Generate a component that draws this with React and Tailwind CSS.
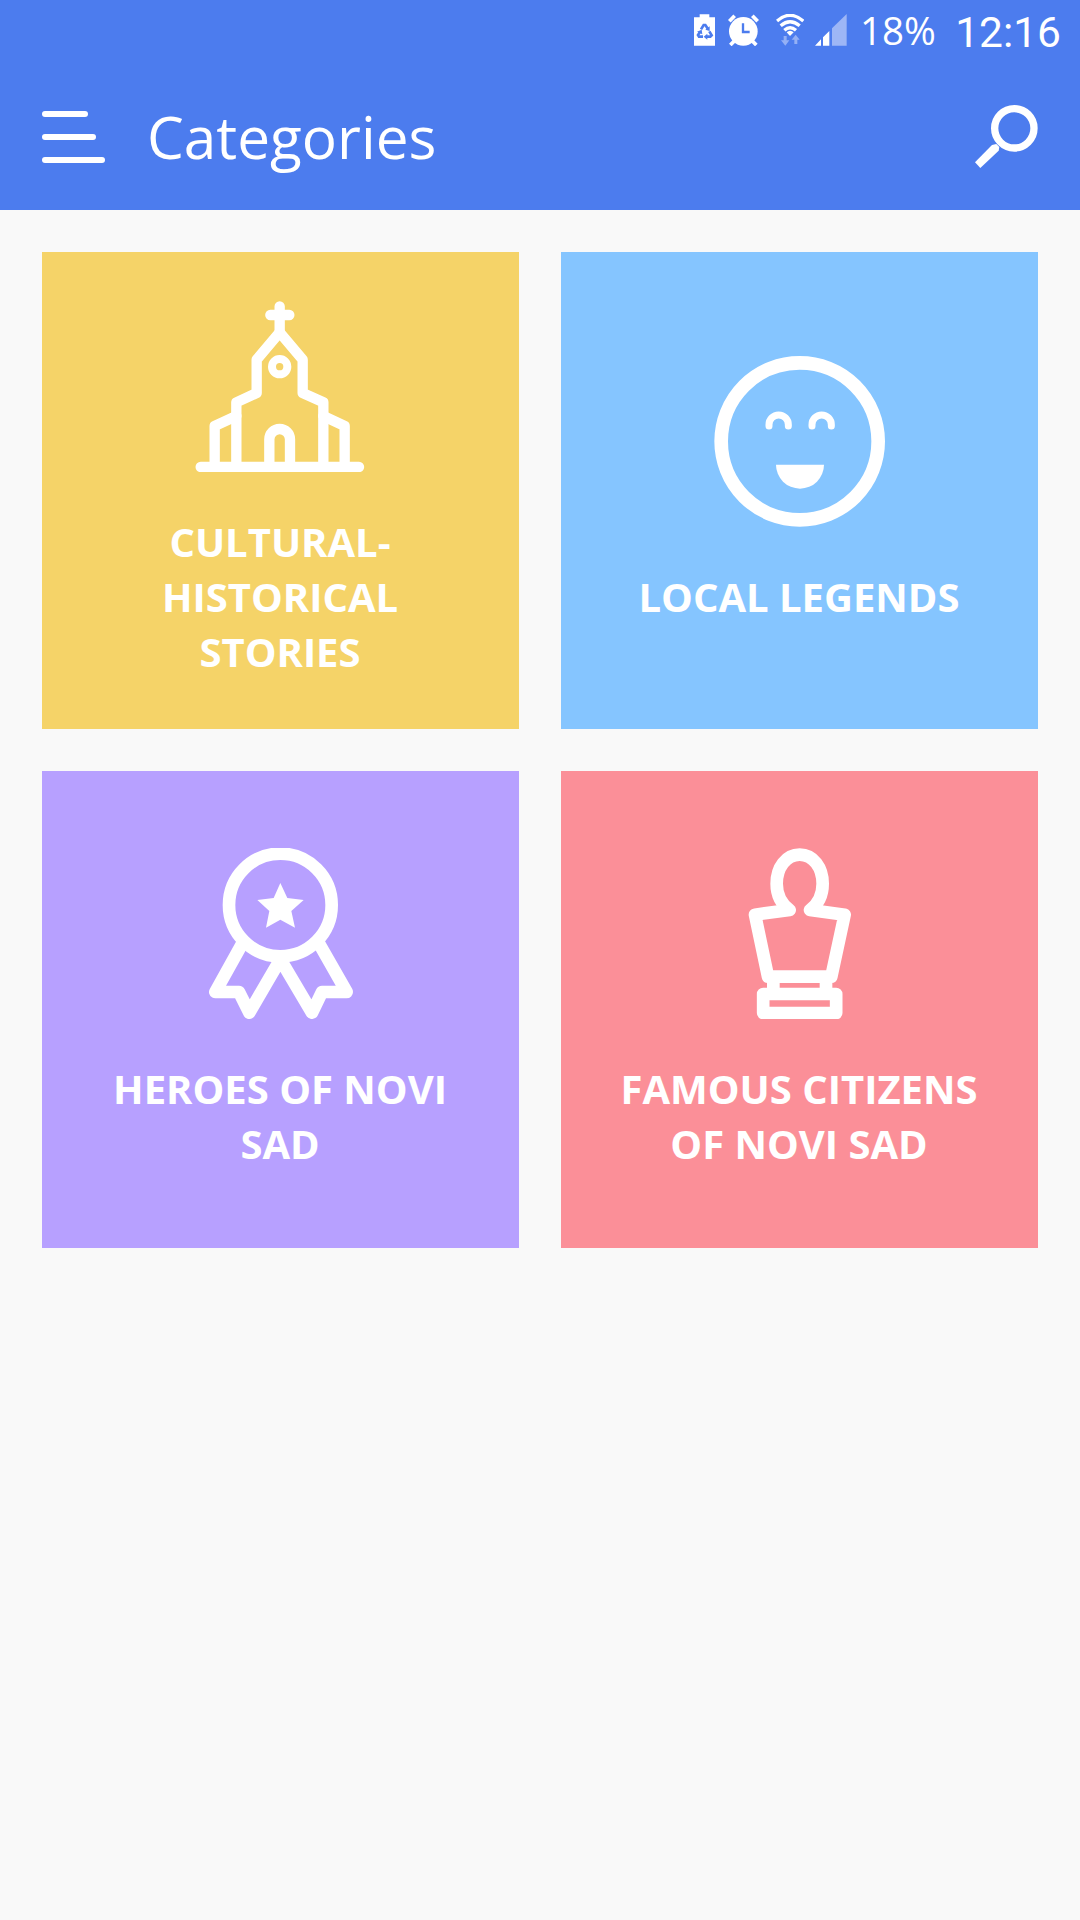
import React from "react";

function BatteryIcon() {
  return (
    <svg className="h-8 w-[21px]" viewBox="42 43 63 96" fill="none">
      <path d="M42 53H59V44H88V53H105V138H42Z" fill="#fff" />
      <g stroke="#4c7cee" strokeWidth="8">
        <path d="M63 89L71 76H76L84 88" />
        <path d="M88 95L95 107L91 111H80" />
        <path d="M69 111H57L54 106L60 97" />
      </g>
      <path d="M89 80V94L76 90ZM82 102V120L71 111ZM51 96L65 90L67 104Z" fill="#4c7cee" />
    </svg>
  );
}

function AlarmIcon() {
  return (
    <svg className="h-8 w-[31px]" viewBox="143 43 93 96" fill="none">
      <circle cx="189" cy="95" r="43" fill="#fff" />
      <path d="M147 65L163 48M216 48L232 65" stroke="#fff" strokeWidth="11" />
      <path d="M150 136L166 120M228 136L212 120" stroke="#fff" strokeWidth="11" />
      <path d="M188 71V97H208" stroke="#4c7cee" strokeWidth="7" />
    </svg>
  );
}

function WifiIcon() {
  return (
    <svg className="h-8 w-[28px]" viewBox="289 43 84 96" fill="none">
      <g stroke="#fff" strokeWidth="10">
        <path d="M292 64Q331 30 371 64" />
        <path d="M303 78Q331 54 360 78" />
        <path d="M314 92Q331 77 349 92" />
      </g>
      <path d="M321 98Q331 89 342 98L331 109Z" fill="#fff" />
      <path
        d="M312 109H321V122H329L317 138L304 122H312ZM344 133H353V120H360L348 105L336 120H344Z"
        fill="#94b0f5"
      />
    </svg>
  );
}

function SignalIcon() {
  return (
    <svg className="h-8 w-[32px]" viewBox="405 43 96 96" fill="none">
      <path d="M456 86L500 43V138H456Z" fill="#9db6f6" />
      <path d="M405 138L423 119V138ZM429 113L448 94V138H429Z" fill="#fff" />
    </svg>
  );
}

function SearchIcon() {
  return (
    <svg className="size-[63px]" viewBox="76 45 189 189" fill="none">
      <circle cx="194" cy="115" r="59" stroke="#fff" strokeWidth="22" />
      <path d="M76 217L127 165L140 162L149 171L147 182L92 234Z" fill="#fff" />
    </svg>
  );
}

function ChurchIcon() {
  return (
    <svg
      className="size-[171px] shrink-0"
      viewBox="45 33 513 513"
      fill="none"
      stroke="#fff"
      strokeWidth="31"
      strokeLinecap="round"
      strokeLinejoin="round"
    >
      <path d="M299 49V128M271 75H328" />
      <path d="M169 530V337L230 309V209L299 127L368 209V309L430 337V530" />
      <path d="M104 530V408L169 378M494 530V408L430 378" />
      <path d="M268 530V448A31 31 0 0 1 330 448V530" />
      <path d="M62 531H537" />
      <circle cx="299" cy="230" r="23" strokeWidth="24" />
    </svg>
  );
}

function SmileIcon() {
  return (
    <svg
      className="size-[171px] shrink-0"
      viewBox="42 48 513 513"
      fill="none"
      stroke="#fff"
      strokeLinecap="round"
    >
      <circle cx="299" cy="304" r="235.5" strokeWidth="41" />
      <path d="M207 258V254A29 29 0 0 1 265 254V258M336 258V254A29 29 0 0 1 394 254V258" strokeWidth="21" />
      <path d="M228 374H372A72 72 0 0 1 228 374Z" fill="#fff" stroke="none" />
    </svg>
  );
}

function MedalIcon() {
  return (
    <svg
      className="size-[171px] shrink-0"
      viewBox="15 53 513 513"
      fill="none"
      stroke="#fff"
      strokeWidth="38"
      strokeLinecap="round"
      strokeLinejoin="round"
    >
      <circle cx="271" cy="224" r="154" />
      <path d="M155 343L76 485H147L178 547L271 387L366 547L396 485H470L389 343" />
      <path
        d="M271 158L292 203L341 209L304 242L315 292L271 268L228 292L238 242L202 209L251 203Z"
        fill="#fff"
        stroke="none"
      />
    </svg>
  );
}

function BustIcon() {
  return (
    <svg
      className="size-[171px] shrink-0"
      viewBox="-18 53 513 513"
      fill="none"
      stroke="#fff"
      strokeWidth="38"
      strokeLinecap="round"
      strokeLinejoin="round"
    >
      <path d="M239 73C198 73 170 112 170 160C170 195 186 222 209 239L105 253L144 439H334L374 253L270 239C293 222 308 195 308 160C308 112 280 73 239 73Z" />
      <rect x="129.500" y="491" width="219" height="57" />
      <path d="M160 450V480M318 450V480" strokeLinecap="butt" />
    </svg>
  );
}

const categories = [
  { label: "CULTURAL-HISTORICAL STORIES", color: "bg-[#f5d368]", Icon: ChurchIcon },
  { label: "LOCAL LEGENDS", color: "bg-[#85c5ff]", Icon: SmileIcon },
  { label: "HEROES OF NOVI SAD", color: "bg-[#b7a0ff]", Icon: MedalIcon },
  { label: "FAMOUS CITIZENS OF NOVI SAD", color: "bg-[#fb8f98]", Icon: BustIcon },
];

function StatusBar() {
  return (
    <div className="flex h-[60px] items-center pl-[694px] leading-none">
      <BatteryIcon />
      <div className="ml-[13px]"><AlarmIcon /></div>
      <div className="ml-[17px]"><WifiIcon /></div>
      <div className="ml-[11px]"><SignalIcon /></div>
      <span className="ml-[13px] mt-[1px] text-[38.5px]">18%</span>
      <span className="ml-auto mr-[19px] mt-[6px] font-['Roboto',sans-serif] text-[42.5px]">12:16</span>
    </div>
  );
}

function AppBar() {
  return (
    <div className="flex h-[150px] items-center px-[42px] pb-[1px]">
      <button className="mt-[4px] flex w-[63px] flex-col gap-[17px]" aria-label="Menu">
        <span className="h-[6px] w-[46px] rounded-full bg-white" />
        <span className="h-[6px] w-[54px] rounded-full bg-white" />
        <span className="h-[6px] w-[63px] rounded-full bg-white" />
      </button>
      <h1 className="ml-[42px] mt-[3px] text-[58.5px] leading-none">Categories</h1>
      <button className="ml-auto mt-[3px]" aria-label="Search">
        <SearchIcon />
      </button>
    </div>
  );
}

export default function App() {
  return (
    <div className="min-h-[1920px] w-[1080px] bg-[#f9f9f9] font-['Open_Sans',sans-serif] text-white">
      <header className="h-[210px] bg-[#4c7cee]">
        <StatusBar />
        <AppBar />
      </header>
      <main className="grid grid-cols-2 gap-[42px] p-[42px]">
        {categories.map(({ label, color, Icon }) => (
          <section key={label} className={`flex h-[477px] flex-col items-center justify-center px-[42px] pb-[1px] ${color}`}>
            <Icon />
            <h2 className="mt-[42px] pr-[1px] text-center text-[40px] leading-[55px] font-bold">{label}</h2>
          </section>
        ))}
      </main>
    </div>
  );
}
